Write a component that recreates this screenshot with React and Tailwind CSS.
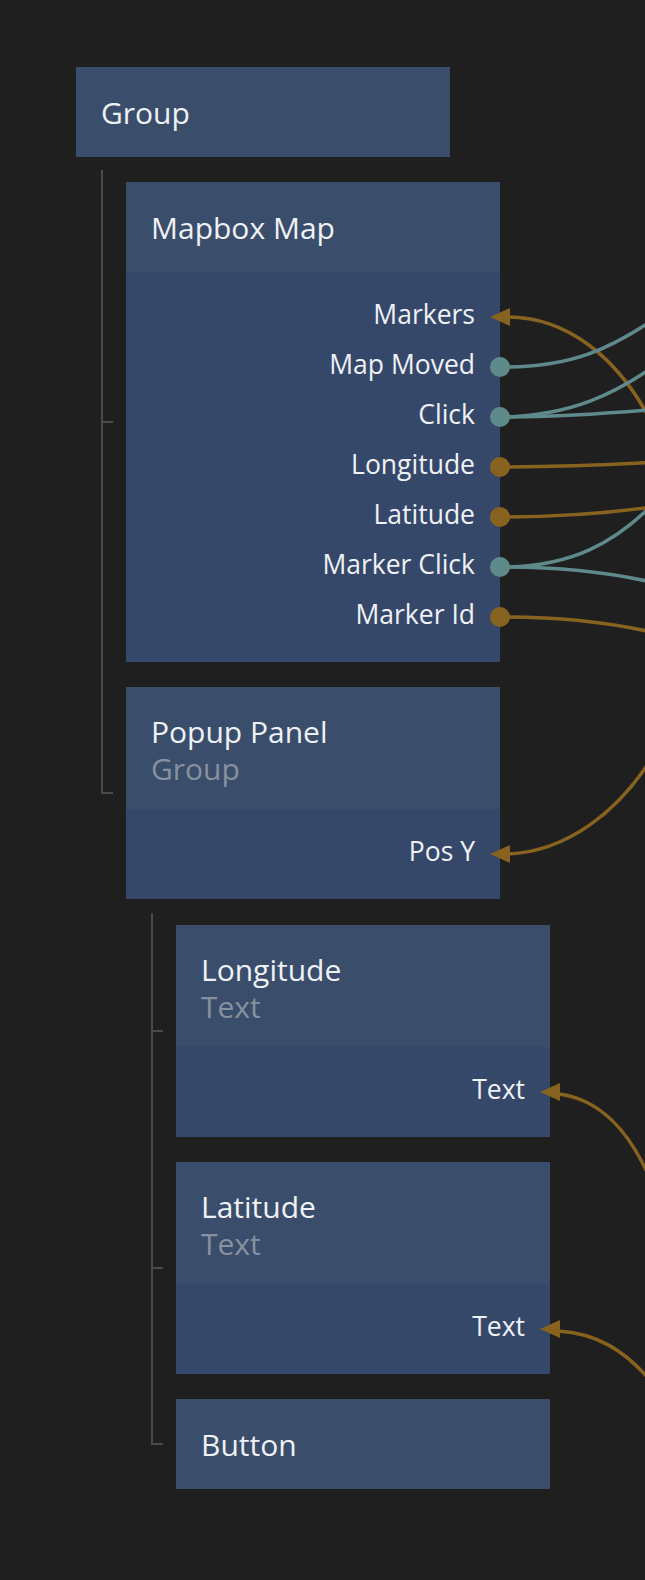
import React from "react";

const TEAL = "#5f8a8b";
const GOLD = "#87631f";

const Port = ({ label, kind, color }) => (
  <div className="relative h-[50px] flex items-center justify-end pr-[25px] pb-[5px]">
    <span className="text-[26.5px] leading-none text-[#eef1f5]">{label}</span>
    {kind === "out" && (
      <span
        className="absolute right-[-10px] top-[15px] w-[20px] h-[20px] rounded-full"
        style={{ background: color }}
      />
    )}
    {kind === "in" && (
      <svg className="absolute right-[-10px] top-[15px]" width="20" height="20" viewBox="0 0 20 20">
        <polygon points="0,10 20,1 20,19" fill={color} />
      </svg>
    )}
  </div>
);

const Node = ({ title, subtitle, ports }) => (
  <div className="w-[374px]">
    <div
      className={`${subtitle ? "h-[122px] pt-[4px]" : "h-[90px]"} bg-[#3a4d6b] pl-[25px] flex flex-col justify-center`}
    >
      <div className="text-[30px] leading-[37px] font-medium text-[#eef1f5]">{title}</div>
      {subtitle && <div className="text-[30px] leading-[37px] text-[#86919f]">{subtitle}</div>}
    </div>
    {ports && (
      <div className="bg-[#36486a] py-[20px]">
        {ports.map((p) => (
          <Port key={p.label} {...p} />
        ))}
      </div>
    )}
  </div>
);

const Children = ({ items }) => (
  <div className="pt-[13px] pl-[25px]">
    {items.map((item, i) => {
      const last = i === items.length - 1;
      return (
        <div key={item.title}>
          <div className={`${i === 0 ? "h-[12px]" : "h-[25px]"} border-l-2 border-[#4a4a4a]`} />
          <div className="flex">
            <div className="w-[25px] shrink-0 flex flex-col">
              <div className="flex-1 w-[12px] border-l-2 border-b-2 border-[#4a4a4a]" />
              <div className={`flex-1 ${last ? "" : "border-l-2 border-[#4a4a4a]"}`} />
            </div>
            <Node {...item} />
          </div>
          {item.children && (
            <div className={last ? "pl-[25px] pt-[1px]" : "pl-[23px] pt-[1px] border-l-2 border-[#4a4a4a]"}>
              <Children items={item.children} />
            </div>
          )}
        </div>
      );
    })}
  </div>
);

const TREE = [
  {
    title: "Mapbox Map",
    ports: [
      { label: "Markers", kind: "in", color: GOLD },
      { label: "Map Moved", kind: "out", color: TEAL },
      { label: "Click", kind: "out", color: TEAL },
      { label: "Longitude", kind: "out", color: GOLD },
      { label: "Latitude", kind: "out", color: GOLD },
      { label: "Marker Click", kind: "out", color: TEAL },
      { label: "Marker Id", kind: "out", color: GOLD },
    ],
  },
  {
    title: "Popup Panel",
    subtitle: "Group",
    ports: [{ label: "Pos Y", kind: "in", color: GOLD }],
    children: [
      { title: "Longitude", subtitle: "Text", ports: [{ label: "Text", kind: "in", color: GOLD }] },
      { title: "Latitude", subtitle: "Text", ports: [{ label: "Text", kind: "in", color: GOLD }] },
      { title: "Button" },
    ],
  },
];

const WIRES = [
  { d: "M508,317 C560,317 620,350 660,440", c: GOLD },
  { d: "M505,367 C570,367 610,350 660,315", c: TEAL },
  { d: "M505,417 C570,415 615,395 660,362", c: TEAL },
  { d: "M505,417 C560,417 610,413 660,409", c: TEAL },
  { d: "M505,467 C560,467 610,465 660,462", c: GOLD },
  { d: "M505,517 C560,517 610,513 660,506", c: GOLD },
  { d: "M505,567 C570,566 615,545 660,497", c: TEAL },
  { d: "M505,567 C560,567 610,572 660,584", c: TEAL },
  { d: "M505,617 C560,617 610,622 660,634", c: GOLD },
  { d: "M508,854 C560,852 622,818 665,735", c: GOLD },
  { d: "M558,1094 C595,1098 630,1126 655,1191", c: GOLD },
  { d: "M558,1331 C595,1333 625,1349 655,1386", c: GOLD },
];

export default function App() {
  return (
    <div
      className="relative w-[645px] h-[1580px] overflow-hidden bg-[#1f1f1f] pt-[67px] pl-[76px]"
      style={{ fontFamily: '"Open Sans", "Noto Sans", sans-serif' }}
    >
      <Node title="Group" />
      <Children items={TREE} />

      <svg
        className="absolute inset-0 pointer-events-none"
        width="645"
        height="1580"
        viewBox="0 0 645 1580"
        fill="none"
      >
        {WIRES.map((w, i) => (
          <path key={i} d={w.d} stroke={w.c} strokeWidth="3.5" />
        ))}
      </svg>
    </div>
  );
}
